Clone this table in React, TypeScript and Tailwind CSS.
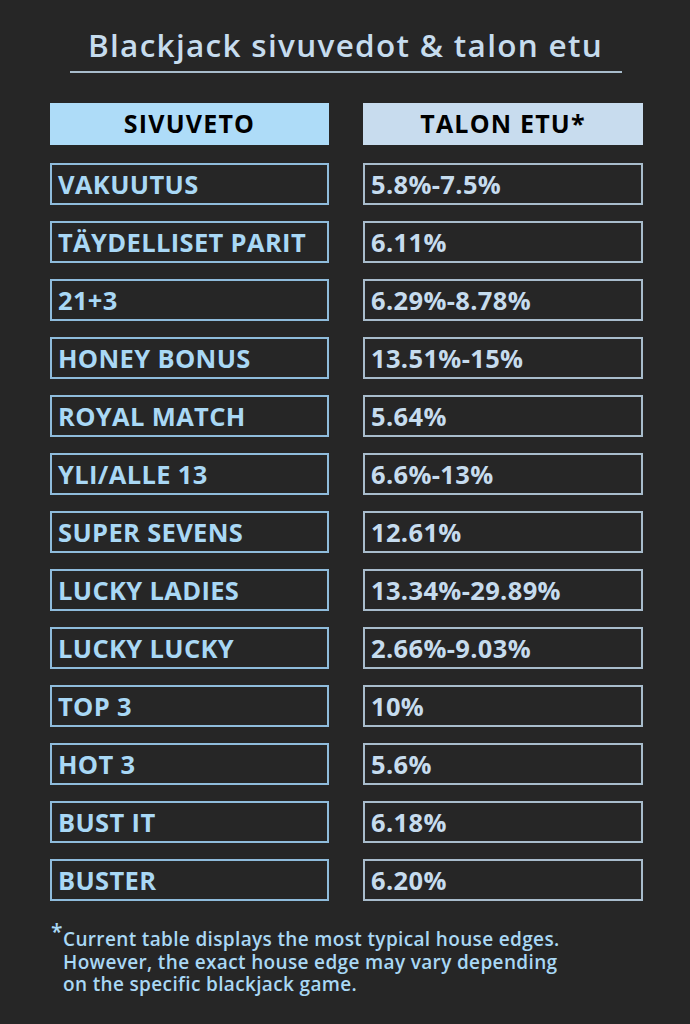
import React from "react";

const rows: [string, string][] = [
  ["VAKUUTUS", "5.8%-7.5%"],
  ["TÄYDELLISET PARIT", "6.11%"],
  ["21+3", "6.29%-8.78%"],
  ["HONEY BONUS", "13.51%-15%"],
  ["ROYAL MATCH", "5.64%"],
  ["YLI/ALLE 13", "6.6%-13%"],
  ["SUPER SEVENS", "12.61%"],
  ["LUCKY LADIES", "13.34%-29.89%"],
  ["LUCKY LUCKY", "2.66%-9.03%"],
  ["TOP 3", "10%"],
  ["HOT 3", "5.6%"],
  ["BUST IT", "6.18%"],
  ["BUSTER", "6.20%"],
];

export default function App() {
  return (
    <div
      className="w-[690px] h-[1024px] bg-[#262626] flex flex-col"
      style={{ fontFamily: '"Open Sans", "Noto Sans", sans-serif' }}
    >
      <div className="flex flex-col items-center pt-[24px]">
        <h1 className="text-[31.5px] leading-[42px] font-semibold text-[#c6dcee] tracking-[1.3px] ml-[1px]">
          Blackjack sivuvedot &amp; talon etu
        </h1>
        <div className="mt-[5px] w-[552px] h-[2px] bg-[#a8bccc] ml-[2px]" />
      </div>
      <div className="pl-[50px] pr-[47px] mt-[30px] flex flex-col gap-[18px]">
        <div className="grid grid-cols-[279px_280px] gap-x-[34px]">
          <div className="h-[42px] bg-[#aedcf8] flex items-center justify-center text-[25px] font-bold text-black tracking-[1.2px]">
            SIVUVETO
          </div>
          <div className="h-[42px] bg-[#c8dcee] flex items-center justify-center text-[25px] font-bold text-black tracking-[1.2px]">
            TALON ETU*
          </div>
        </div>
        <div className="flex flex-col gap-[16px]">
          {rows.map(([a, b]) => (
            <div key={a} className="grid grid-cols-[279px_280px] gap-x-[34px]">
              <div className="h-[42px] border-2 border-[#8fbcdc] flex items-center pl-[6px] text-[25.5px] font-bold text-[#a9d8f5] tracking-[0.35px] whitespace-nowrap">
                {a}
              </div>
              <div className="h-[42px] border-2 border-[#a8bccc] flex items-center pl-[6px] text-[25.5px] font-bold text-[#c6dcee] tracking-[0.35px] whitespace-nowrap">
                {b}
              </div>
            </div>
          ))}
        </div>
      </div>
      <div className="flex pl-[51px] mt-[20px] text-[#a9d8f5] font-semibold">
        <span className="w-[12px] text-[21px] leading-[20px]">*</span>
        <p className="text-[19px] leading-[22.5px] mt-[7px] tracking-[0.35px]">
          Current table displays the most typical house edges.
          <br />
          However, the exact house edge may vary depending
          <br />
          on the specific blackjack game.
        </p>
      </div>
    </div>
  );
}
